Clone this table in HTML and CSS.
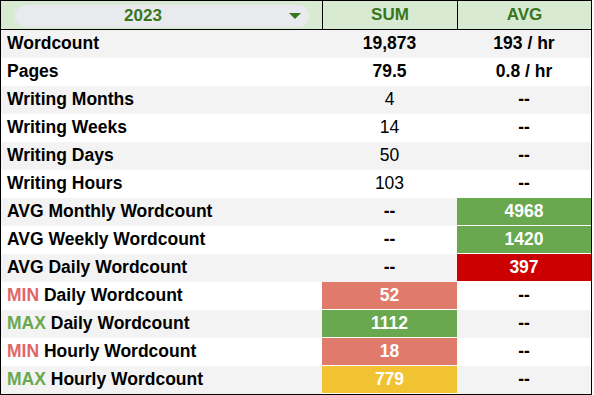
FILE: index.html
```html
<!DOCTYPE html>
<html>
<head>
<meta charset="utf-8">
<link rel="stylesheet" href="styles.css">
</head>
<body>
<div class="sheet">
  <div class="row head">
    <div class="cell label-head">
      <div class="chip">
        <span class="chip-text">2023</span>
        <svg class="caret" width="12" height="6" viewBox="0 0 12 6"><polygon points="0,0 12,0 6,6" fill="#38761d"/></svg>
      </div>
    </div>
    <div class="cell col">SUM</div>
    <div class="cell col">AVG</div>
  </div>

  <div class="row alt">
    <div class="cell label">Wordcount</div>
    <div class="cell val b">19,873</div>
    <div class="cell val b">193 / hr</div>
  </div>
  <div class="row">
    <div class="cell label">Pages</div>
    <div class="cell val b">79.5</div>
    <div class="cell val b">0.8 / hr</div>
  </div>
  <div class="row alt">
    <div class="cell label">Writing Months</div>
    <div class="cell val">4</div>
    <div class="cell val b">--</div>
  </div>
  <div class="row">
    <div class="cell label">Writing Weeks</div>
    <div class="cell val">14</div>
    <div class="cell val b">--</div>
  </div>
  <div class="row alt">
    <div class="cell label">Writing Days</div>
    <div class="cell val">50</div>
    <div class="cell val b">--</div>
  </div>
  <div class="row">
    <div class="cell label">Writing Hours</div>
    <div class="cell val">103</div>
    <div class="cell val b">--</div>
  </div>
  <div class="row alt">
    <div class="cell label">AVG Monthly Wordcount</div>
    <div class="cell val b">--</div>
    <div class="cell val b fill green">4968</div>
  </div>
  <div class="row">
    <div class="cell label">AVG Weekly Wordcount</div>
    <div class="cell val b">--</div>
    <div class="cell val b fill green">1420</div>
  </div>
  <div class="row alt">
    <div class="cell label">AVG Daily Wordcount</div>
    <div class="cell val b">--</div>
    <div class="cell val b fill red">397</div>
  </div>
  <div class="row">
    <div class="cell label"><span class="min">MIN</span> Daily Wordcount</div>
    <div class="cell val b fill salmon">52</div>
    <div class="cell val b">--</div>
  </div>
  <div class="row alt">
    <div class="cell label"><span class="max">MAX</span> Daily Wordcount</div>
    <div class="cell val b fill green">1112</div>
    <div class="cell val b">--</div>
  </div>
  <div class="row">
    <div class="cell label"><span class="min">MIN</span> Hourly Wordcount</div>
    <div class="cell val b fill salmon">18</div>
    <div class="cell val b">--</div>
  </div>
  <div class="row alt">
    <div class="cell label"><span class="max">MAX</span> Hourly Wordcount</div>
    <div class="cell val b fill yellow">779</div>
    <div class="cell val b">--</div>
  </div>
</div>
</body>
</html>
```
FILE: styles.css
```css
html, body {
  margin: 0;
  padding: 0;
  background: #ffffff;
}
body {
  font-family: "Liberation Sans", Arial, sans-serif;
  color: #000;
}
.sheet {
  width: 590px;
  border: 1px solid #000;
  display: flex;
  flex-direction: column;
}
.row {
  display: grid;
  grid-template-columns: 321px 135px 134px;
  height: 28px;
}
.row.alt {
  background: #f3f3f3;
}
.row.head {
  background: #d9ead3;
  border-bottom: 1px solid #000;
  height: 28px;
}
.cell {
  box-sizing: border-box;
  font-size: 17.5px;
  white-space: nowrap;
  line-height: 27px;
}
.label-head {
  display: flex;
  align-items: center;
  padding: 3px 13px 2px 14px;
}
.chip {
  flex: 1;
  height: 22px;
  background: #e8eaed;
  border-radius: 11px;
  display: flex;
  align-items: center;
}
.chip-text {
  flex: 1;
  text-align: center;
  font-weight: bold;
  font-size: 17px;
  line-height: 21px;
  color: #38761d;
  padding-right: 18px;
}
.caret {
  margin-right: 8px;
  margin-top: 0;
}
.col {
  border-left: 1px solid #000;
  text-align: center;
  font-weight: bold;
  font-size: 17px;
  line-height: 27px;
  color: #38761d;
}
.label {
  font-weight: bold;
  padding-left: 6px;
}
.val {
  text-align: center;
}
.b {
  font-weight: bold;
}
.fill {
  color: #fff;
  border-bottom: 1px solid #fff;
}
.green { background: #6aa84f; }
.red { background: #cc0000; }
.salmon { background: #e07b6b; }
.yellow { background: #f1c232; }
.min { color: #e06666; }
.max { color: #6aa84f; }
```
